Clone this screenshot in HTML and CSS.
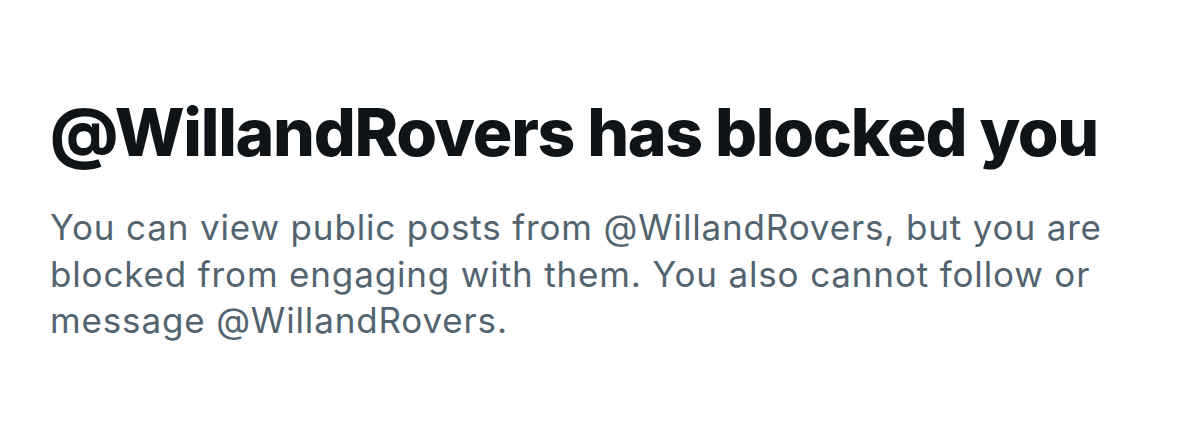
FILE: index.html
```html
<!DOCTYPE html>
<html lang="en">

<head>
    <meta charset="UTF-8">
    <meta name="viewport" content="width=device-width, initial-scale=1.0">
    <title>Blocked</title>
    <link rel="stylesheet" href="styles.css">
</head>

<body>
    <div class="blocked">
        <h1 class="blocked-title">@WillandRovers has blocked you</h1>
        <p class="blocked-text">You can view public posts from @WillandRovers, but you are blocked from engaging with them. You also cannot follow or message @WillandRovers.</p>
    </div>
</body>

</html>
```

FILE: styles.css
```css
/* page */
body {
    margin: 0;
    background: #fff;
    font-family: Inter, "Noto Sans", sans-serif;
}

/* blocked notice */
.blocked {
    display: flex;
    flex-direction: column;
    padding: 96px 50px 0 50px;
}

.blocked-title {
    margin: 0;
    font-size: 66px;
    font-weight: 800;
    line-height: 72px;
    color: #0f1419;
    letter-spacing: -1.3px;
    white-space: nowrap;
}

.blocked-text {
    margin: 36px 0 0 0;
    width: 1080px;
    font-size: 35px;
    line-height: 46.5px;
    font-weight: 400;
    letter-spacing: 0.85px;
    color: #536471;
}
```
